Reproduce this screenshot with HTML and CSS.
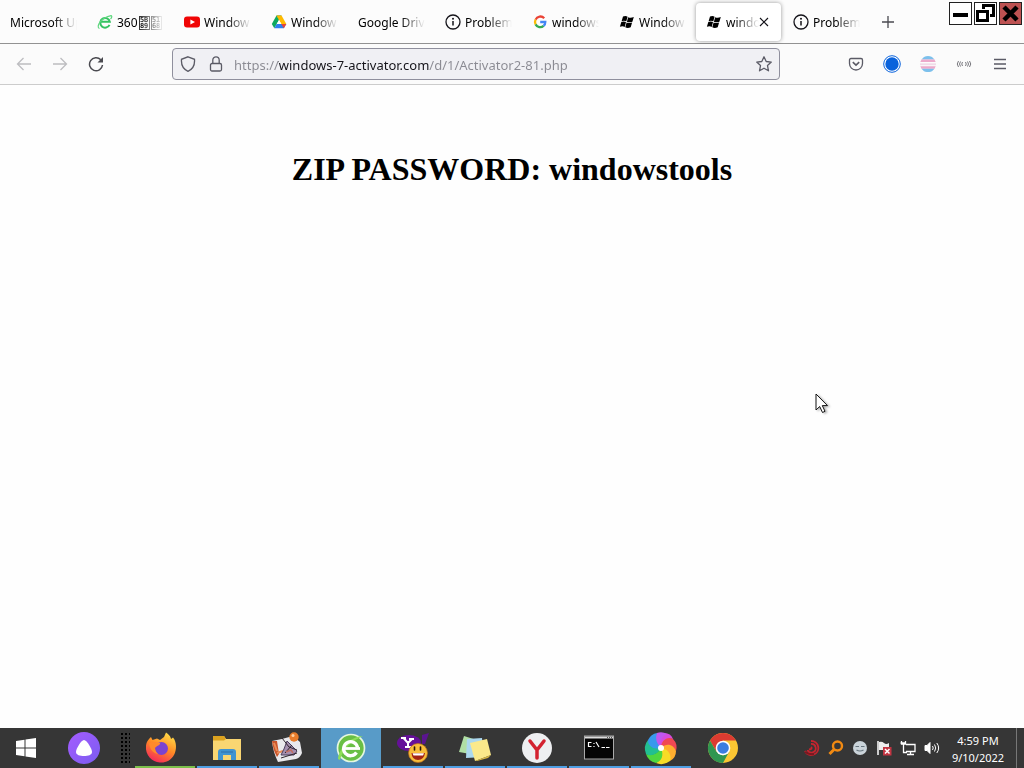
FILE: index.html
```
<!DOCTYPE html>
<html lang="en">
  <head>
    <meta charset="UTF-8" />
    <meta name="viewport" content="width=device-width, initial-scale=1.0" />
    <title>windows-7-activator.com</title>
    <link rel="stylesheet" href="styles.css">
  </head>
  <body>
    <!-- shared icons -->
    <svg class="defs" width="0" height="0">
      <symbol id="info" viewBox="0 0 16 16">
        <circle cx="8" cy="8" r="7" fill="none" stroke="#15141a" stroke-width="1.300" />
        <path d="M8 7v4.600" stroke="#15141a" stroke-width="1.500" />
        <circle cx="8" cy="4.800" r="1" fill="#15141a" />
      </symbol>
      <symbol id="winflag" viewBox="0 0 16 16">
        <path d="M4 2.600Q6.500 1.400 8.600 2.700L7.300 7.300Q5 6.200 2.600 7.300Z" />
        <path d="M9.200 3.200Q11.500 4.300 14.800 3.100L13.400 7.700Q10.500 8.800 7.900 7.700Z" />
        <path d="M2.300 8Q4.700 6.900 7 8L5.700 12.900Q3.400 11.600 .9 12.800Z" />
        <path d="M7.600 8.400Q10.200 9.500 13.100 8.400L11.700 13.200Q8.700 14.500 6.300 13.300Z" />
      </symbol>
    </svg>

    <header class="tabbar">
      <nav class="tabs">
        <button class="tab"><span class="title">Microsoft Up</span></button>
        <button class="tab">
          <svg class="favicon" viewBox="0 0 16 16">
            <path d="M12.500 10.800A4.800 4.800 0 1 1 12.800 7.800H4.200" fill="none" stroke="#35c262" stroke-width="2" />
            <path d="M2.500 14.500C-1.500 13 4 3.500 14 1.600C15.500 2 14.500 4 13.500 5" fill="none" stroke="#5fd77f" stroke-width="1.200" />
          </svg>
          <span class="title">360<span class="hexbox">5B<br>89</span><span class="hexbox">51<br>68</span></span>
        </button>
        <button class="tab">
          <svg class="favicon" viewBox="0 0 16 16">
            <rect x="0" y="2.500" width="16" height="11" rx="3" fill="#f00505" />
            <path d="M6.400 5.400L11 8L6.400 10.600Z" fill="#fff" />
          </svg>
          <span class="title">Window</span>
        </button>
        <button class="tab">
          <svg class="favicon" viewBox="0 0 16 16">
            <path d="M5.500 1.500L8 6L3.300 14.300L.8 10Z" fill="#0da960" />
            <path d="M5.500 1.500H10.500L8 6Z" fill="#188038" />
            <path d="M10.500 1.500L15.300 10H10.300L5.500 1.500Z" fill="#ffba00" />
            <path d="M5.700 10H15.300L12.800 14.300H3.300Z" fill="#2d7ff0" />
            <path d="M15.300 10L12.800 14.300L10.300 10Z" fill="#ea4335" />
            <path d="M8 6L10.300 10H5.700Z" fill="#fff" />
          </svg>
          <span class="title">Window</span>
        </button>
        <button class="tab"><span class="title">Google Drive</span></button>
        <button class="tab">
          <svg class="favicon"><use href="#info" /></svg>
          <span class="title">Problem</span>
        </button>
        <button class="tab">
          <svg class="favicon" viewBox="0 0 16 16" fill="none" stroke-width="2.300">
            <path d="M12.200 4.200A5.200 5.200 0 0 0 3.600 5.600" stroke="#ea4335" />
            <path d="M3.600 5.600A5.200 5.200 0 0 0 3.600 10.400" stroke="#fbbc05" />
            <path d="M3.600 10.400A5.200 5.200 0 0 0 11.600 11.900" stroke="#34a853" />
            <path d="M11.600 11.900A5.200 5.200 0 0 0 13.300 8H8.200" stroke="#4285f4" />
          </svg>
          <span class="title">windows</span>
        </button>
        <button class="tab">
          <svg class="favicon"><use href="#winflag" /></svg>
          <span class="title">Window</span>
        </button>
        <button class="tab active">
          <svg class="favicon"><use href="#winflag" /></svg>
          <span class="title">windo</span>
          <svg class="close" viewBox="0 0 10 10"><path d="M1 1L9 9M9 1L1 9" stroke="#15141a" stroke-width="1.200" /></svg>
        </button>
        <button class="tab">
          <svg class="favicon"><use href="#info" /></svg>
          <span class="title">Problem</span>
        </button>
      </nav>
      <button class="newtab" aria-label="New tab">
        <svg width="12" height="12" viewBox="0 0 12 12"><path d="M6 0V12M0 6H12" stroke="#4a4a50" stroke-width="1.300" /></svg>
      </button>
      <div class="window-controls">
        <button aria-label="Minimize">
          <svg viewBox="0 0 21 21"><path d="M3 12H18" stroke="#000" stroke-width="4" /></svg>
        </button>
        <button aria-label="Restore">
          <svg viewBox="0 0 21 21" fill="none" stroke="#000" stroke-width="3">
            <rect x="2.500" y="8.500" width="10" height="9" />
            <path d="M8.500 6V2.500H18.500V12.500H15" />
          </svg>
        </button>
        <button class="quit" aria-label="Close">
          <svg viewBox="0 0 21 21"><path d="M4 4L17 17M17 4L4 17" stroke="#000" stroke-width="4.500" /></svg>
        </button>
      </div>
    </header>

    <div class="toolbar">
      <button class="tool" aria-label="Back">
        <svg viewBox="0 0 16 16" stroke="#bdbdc0"><path d="M15 8H1.500M7.500 2L1.500 8L7.500 14" /></svg>
      </button>
      <button class="tool" aria-label="Forward">
        <svg viewBox="0 0 16 16" stroke="#bdbdc0"><path d="M1 8H14.500M8.500 2L14.500 8L8.500 14" /></svg>
      </button>
      <button class="tool" aria-label="Reload">
        <svg viewBox="0 0 16 16" stroke="#4a4a50"><path d="M14.500 9A6.500 6.500 0 1 1 12.800 3.800" stroke-width="1.500" /><path d="M15 1V6.500H9.500Z" fill="#4a4a50" stroke="none" /></svg>
      </button>
      <div class="urlbar">
        <svg class="shield" viewBox="0 0 16 16" stroke="#5b5b66"><path d="M8 .8L14.500 3.300C15 9 12.300 13.300 8 15.300C3.700 13.300 1 9 1.500 3.300Z" /></svg>
        <svg class="lock" viewBox="0 0 16 16" stroke="#5b5b66"><rect x="2.500" y="7.500" width="11" height="7.500" rx="1.500" /><path d="M4.800 7.500V4A3.200 3.200 0 0 1 11.200 4V7.500" /></svg>
        <input class="url" type="text" aria-label="Address" value="https://windows-7-activator.com/d/1/Activator2-81.php" />
        <button class="star" aria-label="Bookmark">
          <svg viewBox="0 0 16 16" stroke="#5b5b66"><path d="M8 .8L10.200 5.500L15.300 6.100L11.500 9.600L12.500 14.800L8 12.200L3.500 14.800L4.500 9.600L.7 6.100L5.800 5.500Z" stroke-linejoin="round" /></svg>
        </button>
      </div>
      <button class="tool" aria-label="Pocket">
        <svg viewBox="0 0 16 16" stroke="#5b5b66"><path d="M3 2.500H13Q14.500 2.500 14.500 4V7.500A6.500 6.500 0 0 1 1.500 7.500V4Q1.500 2.500 3 2.500Z" /><path d="M4.800 6.200L8 9.200L11.200 6.200" stroke-width="1.600" /></svg>
      </button>
      <button class="tool" aria-label="Account">
        <svg class="large" viewBox="0 0 18 18"><circle cx="9" cy="9" r="8.300" fill="#fff" stroke="#0a63dc" stroke-width="1" /><circle cx="9" cy="9" r="6.700" fill="#0a63dc" /></svg>
      </button>
      <button class="tool" aria-label="Extension">
        <svg viewBox="0 0 16 16">
          <path d="M4 1Q8 -1 12 1L14.500 3.500H1.500Z" fill="#7cc0ec" />
          <path d="M1.500 3.500H14.500L15.700 6H.3Z" fill="#eda9cb" />
          <path d="M0 7.300H16V9.200H0Z" fill="#f1dbe8" />
          <path d="M.3 10.300H15.700L14.500 12.800H1.500Z" fill="#eda9cb" />
          <path d="M1.500 12.800H14.500L12 15.200Q8 17 4 15.200Z" fill="#7cc0ec" />
        </svg>
      </button>
      <button class="tool" aria-label="Sound">
        <svg viewBox="0 0 16 16" stroke="#77777d"><path d="M2.500 5Q0 8 2.500 11M4.500 5.500Q2.500 8 4.500 10.500M6.500 6Q5 8 6.500 10M9.500 6Q11 8 9.500 10M11.500 5.500Q13.500 8 11.500 10.500M13.500 5Q16 8 13.500 11" stroke-width="1" /></svg>
      </button>
      <button class="tool" aria-label="Menu">
        <svg viewBox="0 0 16 16" stroke="#5b5b66"><path d="M2 3.500H14M2 8H14M2 12.500H14" /></svg>
      </button>
    </div>

    <main class="page">
      <h1>ZIP PASSWORD: windowstools</h1>
    </main>

    <footer class="taskbar">
      <button class="start" aria-label="Start">
        <svg width="20" height="20" viewBox="0 0 20 20" fill="#fff"><path d="M0 3L8.500 1.800V9.500H0ZM9.500 1.600L20 0V9.500H9.500ZM0 10.500H8.500V18.200L0 17ZM9.500 10.500H20V20L9.500 18.400Z" /></svg>
      </button>
      <button class="start wide" aria-label="Alice">
        <svg width="32" height="32" viewBox="0 0 32 32">
          <defs><linearGradient id="alice" x1="0" y1="0" x2="1" y2="1"><stop offset="0" stop-color="#a45cff" /><stop offset="1" stop-color="#7b5cf0" /></linearGradient></defs>
          <circle cx="16" cy="16" r="16" fill="url(#alice)" />
          <path d="M16 8C19 8 24 17 24 20C24 23 20 24 16 24C12 24 8 23 8 20C8 17 13 8 16 8Z" fill="#fff" />
        </svg>
      </button>
      <span class="grip"></span>
      <div class="tasks">
        <button class="task green" aria-label="Firefox">
          <svg viewBox="0 0 32 32">
            <defs><linearGradient id="fox" x1=".8" y1="0" x2=".3" y2="1"><stop offset="0" stop-color="#ffe24a" /><stop offset=".5" stop-color="#ff8a25" /><stop offset="1" stop-color="#f5265c" /></linearGradient></defs>
            <path d="M2 5L3.500 8L8 6.500L11 8L15 5L17 .5C21 3 22 6 22 7L24 5.500C28 10 27.500 18 25.500 22C22 29 16 31 11 30.500C3 30 -4 23 -3 14C-2.500 9 0 7 2 5Z" fill="url(#fox)" />
            <circle cx="12.500" cy="16.500" r="6.500" fill="#7a43cf" />
            <path d="M0 12C2 9 7 10 11 11C12 13 7 14 6 16C6 18 7 20 9 22C3 21 1 16 0 12Z" fill="#ff8a2c" />
          </svg>
        </button>
        <button class="task" aria-label="File Explorer">
          <svg viewBox="0 0 32 32">
            <path d="M2 4H13L15 7H30V28H2Z" fill="#f9d672" />
            <path d="M2 4H13L15 7L13 8.500H2Z" fill="#dca21f" />
            <path d="M7 28V20Q7 17 10 17H22Q25 17 25 20V28H20V23H12V28Z" fill="#4094d0" />
            <path d="M10 20H22" stroke="#2c6faa" stroke-width="1" />
          </svg>
        </button>
        <button class="task" aria-label="Paint">
          <svg viewBox="0 0 32 32">
            <path d="M-1 9Q10 7 20 4L27 10L29 21Q27 26 23 27L5 30Q0 20 -1 9Z" fill="#e9e9ed" />
            <path d="M-1 9L4 9L6 22L4 25Q0 18 -1 9Z" fill="#cb552b" />
            <path d="M1 11L4 19M4 21L10 19" stroke="#e98c58" stroke-width="2" />
            <path d="M14 9L24 19L21 23L8 23L11 17Z" fill="#a48fb0" stroke="#4b3f5f" />
            <path d="M9 6L16 15L24 18M12 21L19 13M8 26L24 21" fill="none" stroke="#30252d" />
            <path d="M13 20L18 18L20 21" fill="none" stroke="#c06e65" stroke-width="1.500" />
            <circle cx="21" cy="5" r="4.700" fill="#e87c2b" /><circle cx="20" cy="3.500" r="1.500" fill="#ffd0a0" />
          </svg>
        </button>
        <button class="task current" aria-label="360 Browser">
          <svg viewBox="0 0 32 32">
            <circle cx="16" cy="16" r="13.500" fill="#69bf45" stroke="#e5f7df" stroke-width="1.700" />
            <path d="M3 27C4 16 15 5 28 4C22 7 9 13 5 28Z" fill="#8edf58" />
            <path d="M21.500 20.500A7 7 0 1 1 22.500 15.500" fill="none" stroke="#fff" stroke-width="3.300" />
            <path d="M10 16.500H25" stroke="#fff" stroke-width="2.800" />
          </svg>
        </button>
        <button class="task" aria-label="Yahoo Messenger">
          <svg viewBox="0 0 32 32">
            <ellipse cx="12" cy="11" rx="12" ry="8" fill="#651099" />
            <path d="M25 3L32 1L28 12H25Z" fill="#5a1490" />
            <path d="M4 6H9M6.500 6L11 11L15 7M12 7H17M11 11V15M8 15H14" fill="none" stroke="#fff" stroke-width="2" />
            <circle cx="21" cy="21" r="9.500" fill="#f7bd3a" stroke="#bd6d18" stroke-width=".7" />
            <path d="M17.500 15V18M23.500 15V18" stroke="#2b1609" stroke-width="1.600" stroke-linecap="round" />
            <path d="M14.500 21H28Q27 28 21 28Q15 28 14.500 21Z" fill="#a42414" /><path d="M15.500 21.300H27L26 23.500H16.500Z" fill="#fff" />
          </svg>
        </button>
        <button class="task" aria-label="Sticky Notes">
          <svg viewBox="0 0 32 32">
            <path d="M5 4L21 9L17 23L0 20Z" fill="#b1dfa5" />
            <path d="M8 7L23 6L25 25L7 26Z" fill="#acd8ef" />
            <path d="M11 11L28 7L32 23L16 29Z" fill="#fbe98b" />
            <path d="M16 29L32 23L29 26L18 29Z" fill="#d8b845" />
          </svg>
        </button>
        <button class="task" aria-label="Yandex">
          <svg viewBox="0 0 32 32">
            <circle cx="16" cy="16" r="15" fill="#eeeff1" />
            <path d="M9 9L16 18L23 9M16 17V26" fill="none" stroke="#d32230" stroke-width="3.500" stroke-linecap="round" />
          </svg>
        </button>
        <button class="task" aria-label="Command Prompt">
          <svg viewBox="0 0 32 32">
            <rect x="1.500" y="4" width="29" height="23" fill="#050505" stroke="#aaa" />
            <path d="M2 5.500H30" stroke="#ddd" stroke-width="2" /><path d="M24 5.500H29" stroke="#555" stroke-dasharray="1 1" />
            <path d="M8.500 10.500H5.500V14.500H8.500M11 11V12M11 14V15M13 10L16 15M18.500 15.500H22M23 15.500H26.500" fill="none" stroke="#fff" stroke-width="1.200" />
          </svg>
        </button>
        <button class="task" aria-label="Browser">
          <svg viewBox="0 0 32 32">
            <path d="M16 16C12 11 14 4 19 1Q26 1 28 7Q21 5 16 16Z" fill="#d64bdd" />
            <path d="M16 16C10 13 7 6 12 1Q17 -1 22 2Q14 5 16 16Z" fill="#c157ef" />
            <path d="M16 16C16 9 22 4 28 7Q33 12 31 19Q26 11 16 16Z" fill="#f04854" />
            <path d="M16 16C22 10 29 13 31 19Q31 26 25 29Q26 20 16 16Z" fill="#ffae2f" />
            <path d="M16 16C24 17 27 24 25 29Q18 34 11 31Q18 27 16 16Z" fill="#f6dc26" />
            <path d="M16 16C19 23 17 29 11 31Q3 29 1 22Q10 25 16 16Z" fill="#50d63e" />
            <path d="M16 16C13 22 6 25 1 22Q-2 14 3 8Q7 16 16 16Z" fill="#22bf91" />
            <path d="M16 16C8 18 3 14 3 8Q6 2 12 1Q9 9 16 16Z" fill="#3899ed" />
            <circle cx="16" cy="16" r="3" fill="#fff" />
          </svg>
        </button>
        <button class="task closed" aria-label="Chrome">
          <svg viewBox="0 0 32 32">
            <circle cx="16" cy="16" r="15" fill="#fbc633" />
            <path d="M3 8.500A15 15 0 0 1 29 8.500H16L9.500 19.700Z" fill="#dc3b31" />
            <path d="M3 8.500L9.500 19.800L16 23.500L22 20L16 31A15 15 0 0 1 3 8.500Z" fill="#309650" />
            <circle cx="16" cy="16" r="7.300" fill="#fff" /><circle cx="16" cy="16" r="5.800" fill="#3b7de0" />
          </svg>
        </button>
      </div>
      <div class="tray">
        <svg viewBox="0 0 16 16" fill="none" stroke="#c5242e" stroke-width="1.800"><path d="M7 1A7 7 0 1 1 1 11" /><path d="M7 4A4.300 4.300 0 1 1 3.500 10" /><path d="M7 7Q9 9 5 9.500" /><path d="M1 12Q5 15 10 14" stroke="#7c1720" /></svg>
        <svg viewBox="0 0 16 16" fill="none" stroke="#f28a12"><circle cx="9.500" cy="6" r="4.500" stroke-width="2.400" /><path d="M6 9.500L1.500 14" stroke-width="3" /></svg>
        <svg viewBox="0 0 16 16"><circle cx="8" cy="8" r="7" fill="#cbd4da" /><path d="M3.500 6.500H7M9 6.500H12.500M4.500 10Q8 12 11.500 10" fill="none" stroke="#68767f" stroke-width="1.200" /></svg>
        <svg viewBox="0 0 16 16"><path d="M2 1V15" stroke="#fff" stroke-width="1.500" /><path d="M3 2Q6 1 8 3T13 3V10H3Z" fill="#eee" /><rect x="7" y="7" width="8.500" height="8.500" fill="#c33542" /><path d="M9 9L13.500 13.500M13.500 9L9 13.500" stroke="#fff" stroke-width="1.500" /></svg>
        <svg viewBox="0 0 16 16" fill="none" stroke="#fff" stroke-width="1.300"><path d="M6 4.500H15V11.500H6M10.500 12V14M7 14.500H14M1.500 1V4H5.500V1M3.500 4V12.500H7M.5 3H6" /></svg>
        <svg viewBox="0 0 16 16" fill="none" stroke="#fff" stroke-width="1"><path d="M1 5.500H3L6 2.500V13.500L3 10.500H1Z" fill="#fff" /><path d="M8.500 6Q10 8 8.500 10M10.500 4.500Q13 8 10.500 11.500M12.800 3Q16.500 8 12.800 13" /></svg>
      </div>
      <div class="clock"><time>4:59 PM</time><time>9/10/2022</time></div>
      <span class="desktop-edge"></span>
    </footer>

    <svg class="cursor" viewBox="0 0 14 21"><path d="M1 1V17L4.700 13.500L7.500 19.500L10 18.300L7.300 12.600H12.500Z" fill="#fff" stroke="#111" /></svg>
  </body>
</html>
```
FILE: styles.css
```
* {
  box-sizing: border-box;
}

body {
  margin: 0;
  min-height: 100vh;
  display: flex;
  flex-direction: column;
  background: #fefefe;
  font-family: "Noto Sans", "Open Sans", sans-serif;
  font-size: 12px;
  color: #15141a;
}

button {
  padding: 0;
  border: none;
  background: none;
  font: inherit;
  color: inherit;
}

svg {
  flex: none;
}

.defs {
  position: absolute;
}

/* tab strip */
.tabbar {
  display: flex;
  height: 44px;
  background: #fcfcfc;
  border-bottom: 1px solid #929292;
}

.tabs {
  display: flex;
  align-items: center;
  color: #000;
}

.tab {
  display: flex;
  align-items: center;
  gap: 4px;
  width: 85px;
  height: 38px;
  margin-right: 2px;
  padding: 1px 8px 0 10px;
  border-radius: 4px;
}

.tab.active {
  padding-right: 12px;
  background: #fff;
  box-shadow: 0 0 4px rgba(0, 0, 0, 0.4);
}

.favicon {
  width: 16px;
  height: 16px;
}

.title {
  flex: 1;
  min-width: 0;
  overflow: hidden;
  white-space: nowrap;
  text-align: left;
  mask-image: linear-gradient(to left, transparent, #000 24px);
}

.active .title {
  margin-right: -4px;
}

.close {
  width: 10px;
  height: 10px;
}

.hexbox {
  display: inline-block;
  width: 11px;
  margin-left: 1px;
  border: 1px solid #333;
  font: bold 7px/6px "DejaVu Sans Mono", monospace;
  text-align: center;
  vertical-align: middle;
}

.newtab {
  width: 35px;
  padding-top: 4px;
}

.window-controls {
  display: flex;
  gap: 2px;
  margin: 2px 2px 0 auto;
}

.window-controls button {
  width: 23px;
  height: 23px;
  border: 1px solid #222;
  background: #fff;
}

.window-controls svg {
  display: block;
}

.window-controls .quit {
  background: #bd5252;
}

/* navigation */
.toolbar {
  display: flex;
  align-items: center;
  height: 41px;
  padding: 0 6px;
  background: #fbfbfb;
  border-bottom: 1px solid #ccc;
}

.tool {
  display: flex;
  align-items: center;
  justify-content: center;
  width: 36px;
  height: 32px;
}

.tool svg,
.urlbar svg {
  width: 16px;
  height: 16px;
  fill: none;
  stroke-width: 1.3;
}

.tool svg.large {
  width: 18px;
  height: 18px;
}

.urlbar {
  flex: 1;
  display: flex;
  align-items: center;
  height: 32px;
  margin: 0 58px;
  padding: 0 7px;
  border: 1px solid #8f8f9d;
  border-radius: 4px;
  background: #f0f0f4;
}

.lock {
  margin: 0 10px 0 12px;
}

.url {
  flex: 1;
  min-width: 0;
  padding: 1px 0 0;
  border: none;
  outline: none;
  font: 13px "Noto Sans", "Open Sans", sans-serif;
  color: transparent;
  /* the host name is darker than the rest of the address */
  background: linear-gradient(to right, #8a8a92 44px, #15141a 44px 195px, #8a8a92 195px);
  background-clip: text;
}

.star {
  display: flex;
}

/* page */
.page {
  flex: 1;
  padding-top: 65px;
  text-align: center;
}

.page h1 {
  margin: 0;
  font: bold 32px/38px "Liberation Serif", serif;
  color: #000;
}

/* taskbar */
.taskbar {
  display: flex;
  align-items: center;
  height: 40px;
  background: #363636;
  color: #fff;
}

.start {
  display: flex;
  align-items: center;
  justify-content: center;
  width: 52px;
  height: 40px;
}

.start.wide {
  width: 64px;
}

.grip {
  width: 10px;
  height: 32px;
  margin: 0 5px 0 4px;
  background: radial-gradient(#000 1px, transparent 1px) 0 0 / 4px 4px;
}

.tasks {
  display: flex;
  gap: 2px;
}

.task {
  display: flex;
  align-items: center;
  justify-content: center;
  width: 60px;
  height: 40px;
  box-shadow: inset 0 -2px #4f9fe3;
}

.task svg {
  width: 32px;
  height: 32px;
  overflow: visible;
}

.task.green {
  box-shadow: inset 0 -2px #7cc04b;
}

.task.current {
  background: #589bc8;
  box-shadow: none;
}

.task.closed {
  box-shadow: none;
}

.tray {
  display: flex;
  gap: 8px;
  margin-left: auto;
}

.tray svg {
  width: 16px;
  height: 16px;
}

.clock {
  display: flex;
  flex-direction: column;
  width: 76px;
  padding-top: 1px;
  font-size: 11px;
  line-height: 17px;
  text-align: center;
}

.desktop-edge {
  width: 8px;
  height: 40px;
  border-left: 1px solid #777;
}

.cursor {
  position: absolute;
  left: 815px;
  top: 393px;
  width: 14px;
  height: 21px;
  filter: drop-shadow(2px 1px 1px rgba(0, 0, 0, 0.3));
}
```
